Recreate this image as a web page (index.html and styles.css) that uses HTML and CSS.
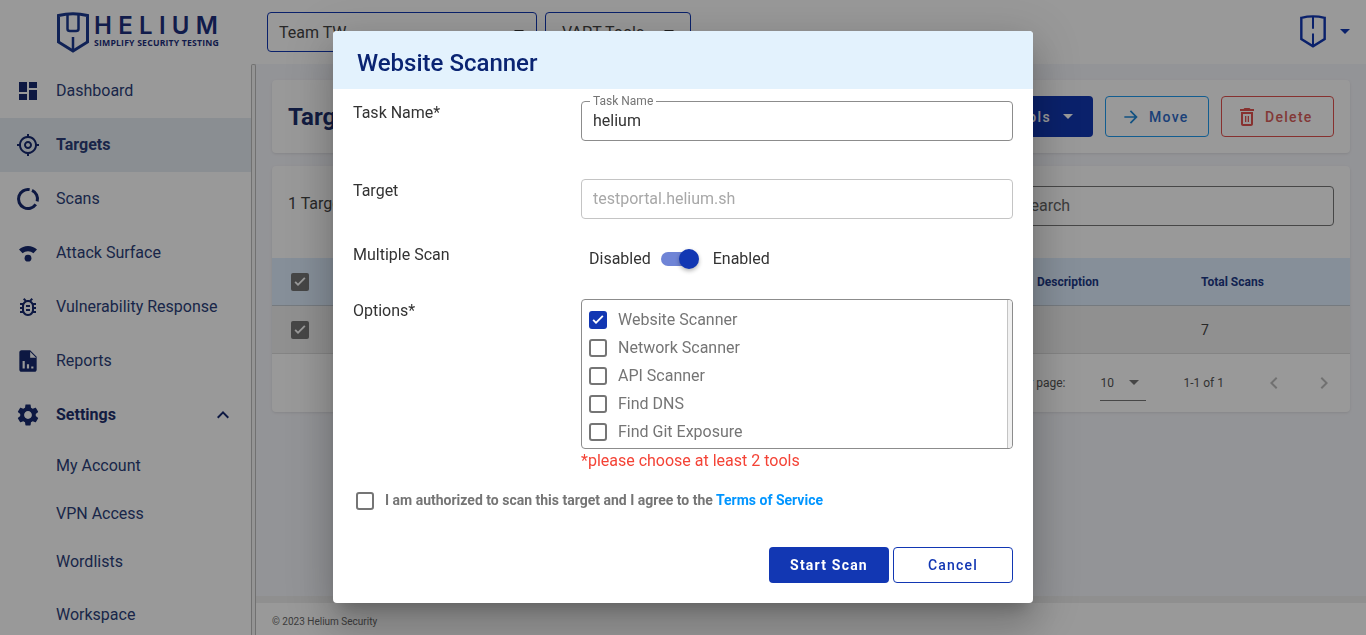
FILE: index.html
```html
<!DOCTYPE html>
<html>
<head>
    <meta charset="utf-8">
    <title>Helium</title>
    <link rel="stylesheet" href="styles.css">
</head>
<body>
    <svg class="defs" width="0" height="0">
        <symbol id="shield-logo" viewBox="0 0 32 41">
            <path d="M1.500 3.500 Q16 0 30.500 3.500 V30 L16 39 L1.500 30 Z" fill="none" stroke="currentColor" stroke-width="3"/>
            <path d="M10.500 2 V17 Q10.500 19 13 19 H19 Q21.500 19 21.500 17 V2 M16 25 V39" fill="none" stroke="currentColor" stroke-width="2.500"/>
        </symbol>
        <symbol id="shield-user" viewBox="0 0 32 41">
            <path d="M1.500 3.500 Q16 0 30.500 3.500 V30 L16 39 L1.500 30 Z" fill="none" stroke="currentColor" stroke-width="3"/>
            <path d="M16 2 V17 M16 23 V39" fill="none" stroke="currentColor" stroke-width="2.500"/>
        </symbol>
    </svg>

    <header class="topbar">
        <div class="logo">
            <svg class="logo-shield"><use href="#shield-logo"/></svg>
            <div class="logo-text">
                <div class="logo-name">HELIUM</div>
                <div class="logo-tag">SIMPLIFY SECURITY TESTING</div>
            </div>
        </div>
        <div class="top-select team">Team TW <span class="caret dark"></span></div>
        <div class="top-select vapt">VAPT Tools <span class="caret dark"></span></div>
        <div class="top-user">
            <svg class="user-shield"><use href="#shield-user"/></svg>
            <span class="caret blue"></span>
        </div>
    </header>

    <div class="layout">
        <nav class="sidebar">
            <a class="nav-item"><svg viewBox="0 0 24 24"><path d="M3 13h8V3H3v10zm0 8h8v-6H3v6zm10 0h8V11h-8v10zm0-18v6h8V3h-8z"/></svg>Dashboard</a>
            <a class="nav-item active"><svg viewBox="0 0 24 24"><path d="M12 8c-2.210 0-4 1.790-4 4s1.790 4 4 4 4-1.790 4-4-1.790-4-4-4zm0 6c-1.100 0-2-.9-2-2s.9-2 2-2 2 .9 2 2-.9 2-2 2zm8.940-3c-.46-4.170-3.770-7.480-7.940-7.940V1h-2v2.060C6.830 3.520 3.520 6.830 3.060 11H1v2h2.060c.46 4.170 3.770 7.480 7.940 7.940V23h2v-2.060c4.170-.46 7.480-3.770 7.940-7.940H23v-2h-2.060zM12 19c-3.870 0-7-3.130-7-7s3.130-7 7-7 7 3.130 7 7-3.130 7-7 7z"/></svg>Targets</a>
            <a class="nav-item"><svg viewBox="0 0 24 24"><path class="ring" d="M16.010 3.390 A9.500 9.500 0 0 1 21.180 14.460 M19.780 17.450 A9.500 9.500 0 1 1 13.650 2.640"/></svg>Scans</a>
            <a class="nav-item"><svg viewBox="0 0 24 24"><path d="M3 8.500C5.500 6.200 8.600 5 12 5s6.500 1.200 9 3.500l-3.600 3.800C15.900 11 14 10.300 12 10.300S8.100 11 6.600 12.300z"/><circle cx="12" cy="17.200" r="3.400"/></svg>Attack Surface</a>
            <a class="nav-item"><svg viewBox="0 0 24 24"><path d="M20 8h-2.810c-.45-.78-1.070-1.450-1.820-1.960L17 4.410 15.590 3l-2.170 2.170C12.960 5.060 12.490 5 12 5s-.96.060-1.410.17L8.410 3 7 4.410l1.620 1.630C7.880 6.550 7.260 7.220 6.810 8H4v2h2.090c-.05.33-.09.660-.09 1v1H4v2h2v1c0 .34.040.67.090 1H4v2h2.810c1.040 1.790 2.970 3 5.190 3s4.150-1.210 5.190-3H20v-2h-2.090c.05-.33.090-.66.090-1v-1h2v-2h-2v-1c0-.34-.04-.67-.09-1H20V8zm-4 7c0 2.210-1.790 4-4 4s-4-1.790-4-4v-4c0-2.210 1.790-4 4-4s4 1.790 4 4v4zm-6-1h4v2h-4zm0-4h4v2h-4z"/></svg>Vulnerability Response</a>
            <a class="nav-item"><svg class="large" viewBox="0 0 24 24"><path d="M14 2H6c-1.100 0-2 .9-2 2v16c0 1.100.9 2 2 2h12c1.100 0 2-.9 2-2V8l-6-6zM9 19H7v-7h2v7zm4 0h-2v-4h2v4zm4 0h-2v-2h2v2zm-3-10V3.500L19.500 9H14z"/></svg>Reports</a>
            <a class="nav-item group"><svg class="large" viewBox="0 0 24 24"><path d="M19.140 12.940c.04-.3.060-.61.060-.94 0-.32-.02-.64-.07-.94l2.030-1.580c.18-.14.230-.41.120-.61l-1.920-3.320c-.12-.22-.37-.29-.59-.22l-2.390.96c-.5-.38-1.030-.7-1.620-.94l-.36-2.540c-.04-.24-.24-.41-.48-.41h-3.840c-.24 0-.43.170-.47.410l-.36 2.540c-.59.240-1.130.570-1.620.940l-2.390-.96c-.22-.08-.47 0-.59.220L2.740 8.870c-.12.210-.08.470.120.610l2.030 1.580c-.05.3-.09.630-.09.940s.02.640.07.940l-2.030 1.580c-.18.140-.23.410-.12.610l1.920 3.320c.12.220.37.290.59.220l2.390-.96c.5.380 1.030.7 1.620.940l.36 2.540c.05.240.24.410.48.410h3.840c.24 0 .44-.17.47-.41l.36-2.540c.59-.24 1.130-.56 1.620-.94l2.390.96c.22.080.47 0 .59-.22l1.920-3.320c.12-.22.070-.47-.12-.61l-2.010-1.580zM12 15.600c-1.980 0-3.600-1.620-3.600-3.600s1.620-3.600 3.600-3.600 3.600 1.620 3.600 3.600-1.620 3.600-3.600 3.600z"/></svg>Settings
                <svg class="chevron" viewBox="0 0 24 24"><path d="M12 8l-6 6 1.410 1.410L12 10.830l4.590 4.580L18 14z"/></svg>
            </a>
            <a class="sub-item">My Account</a>
            <a class="sub-item">VPN Access</a>
            <a class="sub-item">Wordlists</a>
            <a class="sub-item last">Workspace</a>
        </nav>
        <div class="side-scroll"></div>

        <main class="content">
            <div class="page-area">
                <section class="card title-card">
                    <h1>Targets</h1>
                    <div class="actions">
                        <button class="btn-tools">Tools <span class="caret white"></span></button>
                        <button class="btn-move">
                            <svg viewBox="0 0 24 24"><path d="M12 4l-1.410 1.410L16.170 11H4v2h12.170l-5.580 5.590L12 20l8-8z"/></svg>Move
                        </button>
                        <button class="btn-delete">
                            <svg viewBox="0 0 24 24"><path d="M6 19c0 1.100.9 2 2 2h8c1.100 0 2-.9 2-2V7H6v12zM8 9h8v10H8V9zm7.500-5l-1-1h-5l-1 1H5v2h14V4h-3.500zM10 11h1.300v6H10zM12.700 11H14v6h-1.300z"/></svg>Delete
                        </button>
                    </div>
                </section>

                <section class="card table-card">
                    <div class="table-top">
                        <span class="count">1 Targets</span>
                        <div class="search">Search</div>
                    </div>
                    <div class="table-row head">
                        <span class="box-dark"><svg viewBox="0 0 18 18"><path d="M3.500 9.500l3.500 3.500 7.500-7.500-1.300-1.300L7 10.400 4.800 8.200z"/></svg></span>
                        <span>Name</span>
                        <span>Description</span>
                        <span>Total Scans</span>
                    </div>
                    <div class="table-row body">
                        <span class="box-dark"><svg viewBox="0 0 18 18"><path d="M3.500 9.500l3.500 3.500 7.500-7.500-1.300-1.300L7 10.400 4.800 8.200z"/></svg></span>
                        <span>testportal.helium.sh</span>
                        <span></span>
                        <span>7</span>
                    </div>
                    <div class="pager">
                        <span>Rows per page:</span>
                        <span class="pager-select">10 <span class="caret dim"></span></span>
                        <span class="pager-range">1-1 of 1</span>
                        <svg class="pager-arrow" viewBox="0 0 24 24"><path d="M15.410 7.410L14 6l-6 6 6 6 1.410-1.410L10.830 12z"/></svg>
                        <svg class="pager-arrow" viewBox="0 0 24 24"><path d="M10 6L8.590 7.410 13.170 12l-4.580 4.590L10 18l6-6z"/></svg>
                    </div>
                </section>
            </div>
            <footer class="footer">© 2023 Helium Security</footer>
        </main>
    </div>

    <div class="backdrop"></div>

    <div class="modal">
        <div class="modal-head">Website Scanner</div>
        <form class="modal-body">
            <div class="form-row row-task">
                <label>Task Name*</label>
                <div class="field">
                    <span class="field-legend">Task Name</span>
                    helium
                </div>
            </div>
            <div class="form-row row-target">
                <label>Target</label>
                <div class="field disabled">testportal.helium.sh</div>
            </div>
            <div class="form-row row-multi">
                <label>Multiple Scan</label>
                <div class="switch-line">
                    <span class="switch-text">Disabled</span>
                    <span class="switch"><span class="switch-thumb"></span></span>
                    <span class="switch-text">Enabled</span>
                </div>
            </div>
            <div class="form-row">
                <label>Options*</label>
                <div>
                    <div class="options">
                        <ul class="options-list">
                            <li><span class="check on"><svg viewBox="0 0 18 18"><path d="M3.500 9.500l3.500 3.500 7.500-7.500-1.300-1.300L7 10.400 4.800 8.200z"/></svg></span>Website Scanner</li>
                            <li><span class="check"></span>Network Scanner</li>
                            <li><span class="check"></span>API Scanner</li>
                            <li><span class="check"></span>Find DNS</li>
                            <li><span class="check"></span>Find Git Exposure</li>
                        </ul>
                        <div class="options-scroll"></div>
                    </div>
                    <div class="options-error">*please choose at least 2 tools</div>
                </div>
            </div>
            <div class="terms">
                <span class="check"></span>
                <span>I am authorized to scan this target and I agree to the <a class="terms-link">Terms of Service</a></span>
            </div>
            <div class="modal-actions">
                <button type="button" class="btn-start">Start Scan</button>
                <button type="button" class="btn-cancel">Cancel</button>
            </div>
        </form>
    </div>
</body>
</html>
```

FILE: styles.css
```css
* {
    box-sizing: border-box;
}
html, body {
    margin: 0;
    height: 635px;
    overflow: hidden;
}
body {
    font-family: Roboto, "Liberation Sans", sans-serif;
    font-size: 16px;
    background-color: #fff;
    color: #333;
}
button {
    font-family: inherit;
}
.defs {
    position: absolute;
}

/* carets */
.caret {
    display: inline-block;
    width: 0;
    height: 0;
    border-left: 5px solid transparent;
    border-right: 5px solid transparent;
    border-top: 5px solid #333;
}
.caret.blue {
    border-top-color: #1237b3;
}
.caret.white {
    border-top-color: #fff;
}
.caret.dim {
    border-top-color: #757575;
}

/* top bar */
.topbar {
    height: 64px;
    display: flex;
    align-items: flex-start;
    background-color: #fff;
}
.logo {
    width: 267px;
    padding: 12px 0 0 57px;
    display: flex;
    color: #1c3a8f;
}
.logo-shield {
    width: 32px;
    height: 41px;
}
.logo-text {
    margin-left: 5px;
    color: #1d2f7d;
}
.logo-name {
    font-family: Inter, sans-serif;
    font-size: 24px;
    line-height: 24px;
    font-weight: 600;
    letter-spacing: 6.300px;
    margin-top: 2px;
}
.logo-tag {
    font-family: "Open Sans", sans-serif;
    font-size: 8.700px;
    line-height: 11px;
    font-weight: 700;
    white-space: nowrap;
    letter-spacing: 0.180px;
}
.top-select {
    height: 40px;
    margin-top: 12px;
    padding: 0 12px 0 11px;
    border: 1px solid #1237b3;
    border-radius: 4px;
    display: flex;
    align-items: center;
    justify-content: space-between;
    color: #444;
}
.top-select.team {
    width: 270px;
}
.top-select.vapt {
    width: 146px;
    margin-left: 8px;
    padding: 0 16px;
}
.top-user {
    margin-left: auto;
    padding: 15px 16px 0 0;
    display: flex;
    align-items: center;
    gap: 14px;
    color: #1237b3;
}
.user-shield {
    width: 26px;
    height: 33px;
}

/* sidebar */
.layout {
    display: flex;
    height: 571px;
}
.sidebar {
    width: 251px;
    flex-shrink: 0;
    background-color: #fff;
}
.side-scroll {
    width: 5px;
    flex-shrink: 0;
    border: 1px solid #bcbcbc;
    border-bottom: none;
    border-radius: 2px 2px 0 0;
    background-color: #f7f7f7;
}
.nav-item {
    height: 54px;
    display: flex;
    align-items: center;
    padding: 0 0 2px 16px;
    color: #2c3f7a;
}
.nav-item svg {
    width: 24px;
    height: 24px;
    margin: 2px 16px 0 0;
    fill: #16296e;
}
.nav-item svg.large {
    width: 26px;
    height: 26px;
    margin: 2px 15px 0 -1px;
}
.nav-item .ring {
    fill: none;
    stroke: #16296e;
    stroke-width: 3;
}
.nav-item.active {
    background-color: #e7edf3;
    font-weight: 700;
}
.nav-item.group {
    font-weight: 700;
    color: #1d2f6d;
}
.nav-item .chevron {
    margin: 2px 0 0 auto;
    transform: translateX(-16px);
}
.sub-item {
    height: 48px;
    display: flex;
    align-items: center;
    padding: 0 0 2px 56px;
    color: #2c3f7a;
}
.sub-item.last {
    margin-top: 5px;
}

/* main */
.content {
    flex: 1;
    display: flex;
    flex-direction: column;
    min-width: 0;
}
.page-area {
    flex: 1;
    background-color: #f6f7fc;
    padding: 16px 16px 0;
}
.footer {
    height: 39px;
    border-top: 7px solid #eee;
    background-color: #fff;
    padding: 13px 16px 0;
    font-size: 10px;
    color: #666;
}
.card {
    background-color: #fff;
    border-radius: 4px;
    box-shadow: 0 1px 3px rgba(0, 0, 0, 0.1);
}
.title-card {
    height: 73px;
    display: flex;
    align-items: center;
    justify-content: space-between;
    padding: 0 16px;
}
.title-card h1 {
    margin: 0;
    font-size: 24px;
    font-weight: 700;
    color: #1d2f6d;
}
.actions {
    display: flex;
    gap: 12px;
}
.actions button {
    height: 41px;
    border-radius: 4px;
    font-size: 14px;
    font-weight: 500;
    letter-spacing: 1.300px;
    display: flex;
    align-items: center;
    background: none;
}
.actions svg {
    width: 20px;
    height: 20px;
    margin-right: 8px;
}
.btn-tools {
    width: 120px;
    padding: 0 20px 0 0;
    border: none;
    justify-content: flex-end;
    background-color: #1237b3 !important;
    color: #fff;
    gap: 12px;
}
.btn-move {
    width: 104px;
    padding: 0 0 0 15px;
    border: 1px solid #1e9bf0;
    color: #2e6bc9;
}
.btn-move svg {
    fill: #1e88d8;
}
.btn-delete {
    width: 113px;
    padding: 0 0 0 13px;
    border: 1px solid #e2534f;
    color: #d9605c;
}
.actions .btn-delete svg {
    width: 24px;
    height: 24px;
    margin-right: 6px;
    fill: #e2534f;
}
.table-card {
    height: 246px;
    margin-top: 13px;
}
.table-top {
    height: 92px;
    display: flex;
    align-items: flex-start;
    justify-content: space-between;
    padding: 20px 16px 0;
}
.count {
    line-height: 36px;
    color: #444;
}
.search {
    width: 326px;
    height: 40px;
    border: 1px solid #777;
    border-radius: 4px;
    padding: 0 0 0 12px;
    line-height: 38px;
    color: #666;
}
.table-row {
    display: grid;
    grid-template-columns: 56px 1fr 164px 149px;
    align-items: center;
    padding-left: 19px;
    font-size: 14px;
}
.table-row.head {
    height: 48px;
    background-color: #e0efff;
    border-bottom: 1px solid #c4ccd4;
    font-size: 12px;
    font-weight: 700;
    color: #1d3a87;
}
.table-row.body {
    height: 48px;
    background-color: #f1f1f1;
    border-bottom: 1px solid #ddd;
    color: #444;
}
.box-dark {
    width: 18px;
    height: 18px;
    border-radius: 2px;
    background-color: #757575;
    fill: #fff;
    display: flex;
}
.pager {
    height: 58px;
    display: flex;
    align-items: center;
    justify-content: flex-end;
    font-size: 12px;
    color: #555;
}
.pager-select {
    width: 46px;
    height: 36px;
    margin: 0 0 0 35px;
    border-bottom: 1px solid #777;
    display: flex;
    align-items: center;
    justify-content: space-between;
    padding-right: 7px;
    font-size: 12px;
}
.pager-range {
    margin: 0 38px 0 37px;
}
.pager-arrow {
    width: 24px;
    height: 24px;
    margin-right: 26px;
    fill: #bdbdbd;
}
.pager-arrow:last-child {
    margin-right: 14px;
}

/* modal */
.backdrop {
    position: fixed;
    top: 0;
    right: 0;
    bottom: 0;
    left: 0;
    background-color: rgba(0, 0, 0, 0.4);
}
.modal {
    position: absolute;
    top: 31px;
    left: 333px;
    width: 700px;
    height: 572px;
    background-color: #fff;
    border-radius: 4px;
    overflow: hidden;
    color: #333;
    box-shadow: 0 11px 15px -7px rgba(0, 0, 0, 0.2), 0 24px 38px 3px rgba(0, 0, 0, 0.14), 0 9px 46px 8px rgba(0, 0, 0, 0.12);
}
.modal-head {
    height: 58px;
    padding: 0 24px;
    background-color: #e3f2fd;
    font-size: 24px;
    font-weight: 500;
    line-height: 65px;
    color: #0a2472;
}
.modal-body {
    padding: 12px 20px 0;
}
.form-row {
    display: grid;
    grid-template-columns: 228px 432px;
}
.form-row label {
    line-height: 24px;
}
.row-task {
    margin-bottom: 38px;
}
.row-target {
    margin-bottom: 23px;
}
.row-multi {
    height: 34px;
    margin-bottom: 23px;
}
.row-multi label {
    margin-top: 1px;
}
.field {
    position: relative;
    height: 40px;
    padding: 0 11px;
    border: 1px solid #8c8c8c;
    border-radius: 4px;
    line-height: 38px;
    color: #333;
}
.field.disabled {
    border-color: #c4c4c4;
    color: #a8a8a8;
}
.field-legend {
    position: absolute;
    top: -7px;
    left: 8px;
    padding: 0 3px;
    background-color: #fff;
    font-size: 12px;
    line-height: 13px;
    color: #757575;
}
.switch-line {
    display: flex;
    align-items: center;
    height: 34px;
    padding-left: 8px;
}
.switch-text {
    padding-bottom: 2px;
}
.switch {
    position: relative;
    width: 38px;
    height: 14px;
    margin: 0 14px 0 10px;
    border-radius: 7px;
    background: linear-gradient(to right, #6f84d6 90%, transparent 90%);
}
.switch-thumb {
    position: absolute;
    top: -3px;
    right: 0;
    width: 20px;
    height: 20px;
    border-radius: 50%;
    background-color: #1237b3;
    box-shadow: 0 2px 4px rgba(0, 0, 0, 0.3);
}
.options {
    height: 150px;
    display: flex;
    justify-content: space-between;
    border: 1px solid #8c8c8c;
    border-radius: 4px;
}
.options-list {
    list-style: none;
    margin: 0;
    padding: 5px 7px;
}
.options-list li {
    height: 28px;
    display: flex;
    align-items: center;
    color: #757575;
}
.options-scroll {
    width: 5px;
    border-left: 1px solid #c4c4c4;
    border-radius: 0 4px 4px 0;
    background-color: #f1f1f1;
}
.check {
    width: 18px;
    height: 18px;
    margin: 2px 11px 0 0;
    flex-shrink: 0;
    border: 2px solid #757575;
    border-radius: 3px;
    display: block;
}
.check.on {
    border: none;
    background-color: #1237b3;
    fill: #fff;
}
.check svg {
    display: block;
}
.options-error {
    margin-top: 2px;
    line-height: 20px;
    color: #f44336;
}
.terms {
    display: flex;
    align-items: center;
    height: 20px;
    margin: 19px 0 0 3px;
    font-size: 14px;
    font-weight: 700;
    color: #757575;
}
.terms-link {
    color: #0095ff;
}
.modal-actions {
    display: flex;
    justify-content: flex-end;
    gap: 4px;
    margin-top: 37px;
}
.modal-actions button {
    width: 120px;
    height: 36px;
    border-radius: 4px;
    font-size: 14px;
    letter-spacing: 1.200px;
}
.btn-start {
    border: none;
    background-color: #1237b3;
    color: #fff;
    font-weight: 700;
}
.btn-cancel {
    border: 1px solid #1237b3;
    background-color: #fff;
    color: #1237b3;
    font-weight: 500;
}
```
